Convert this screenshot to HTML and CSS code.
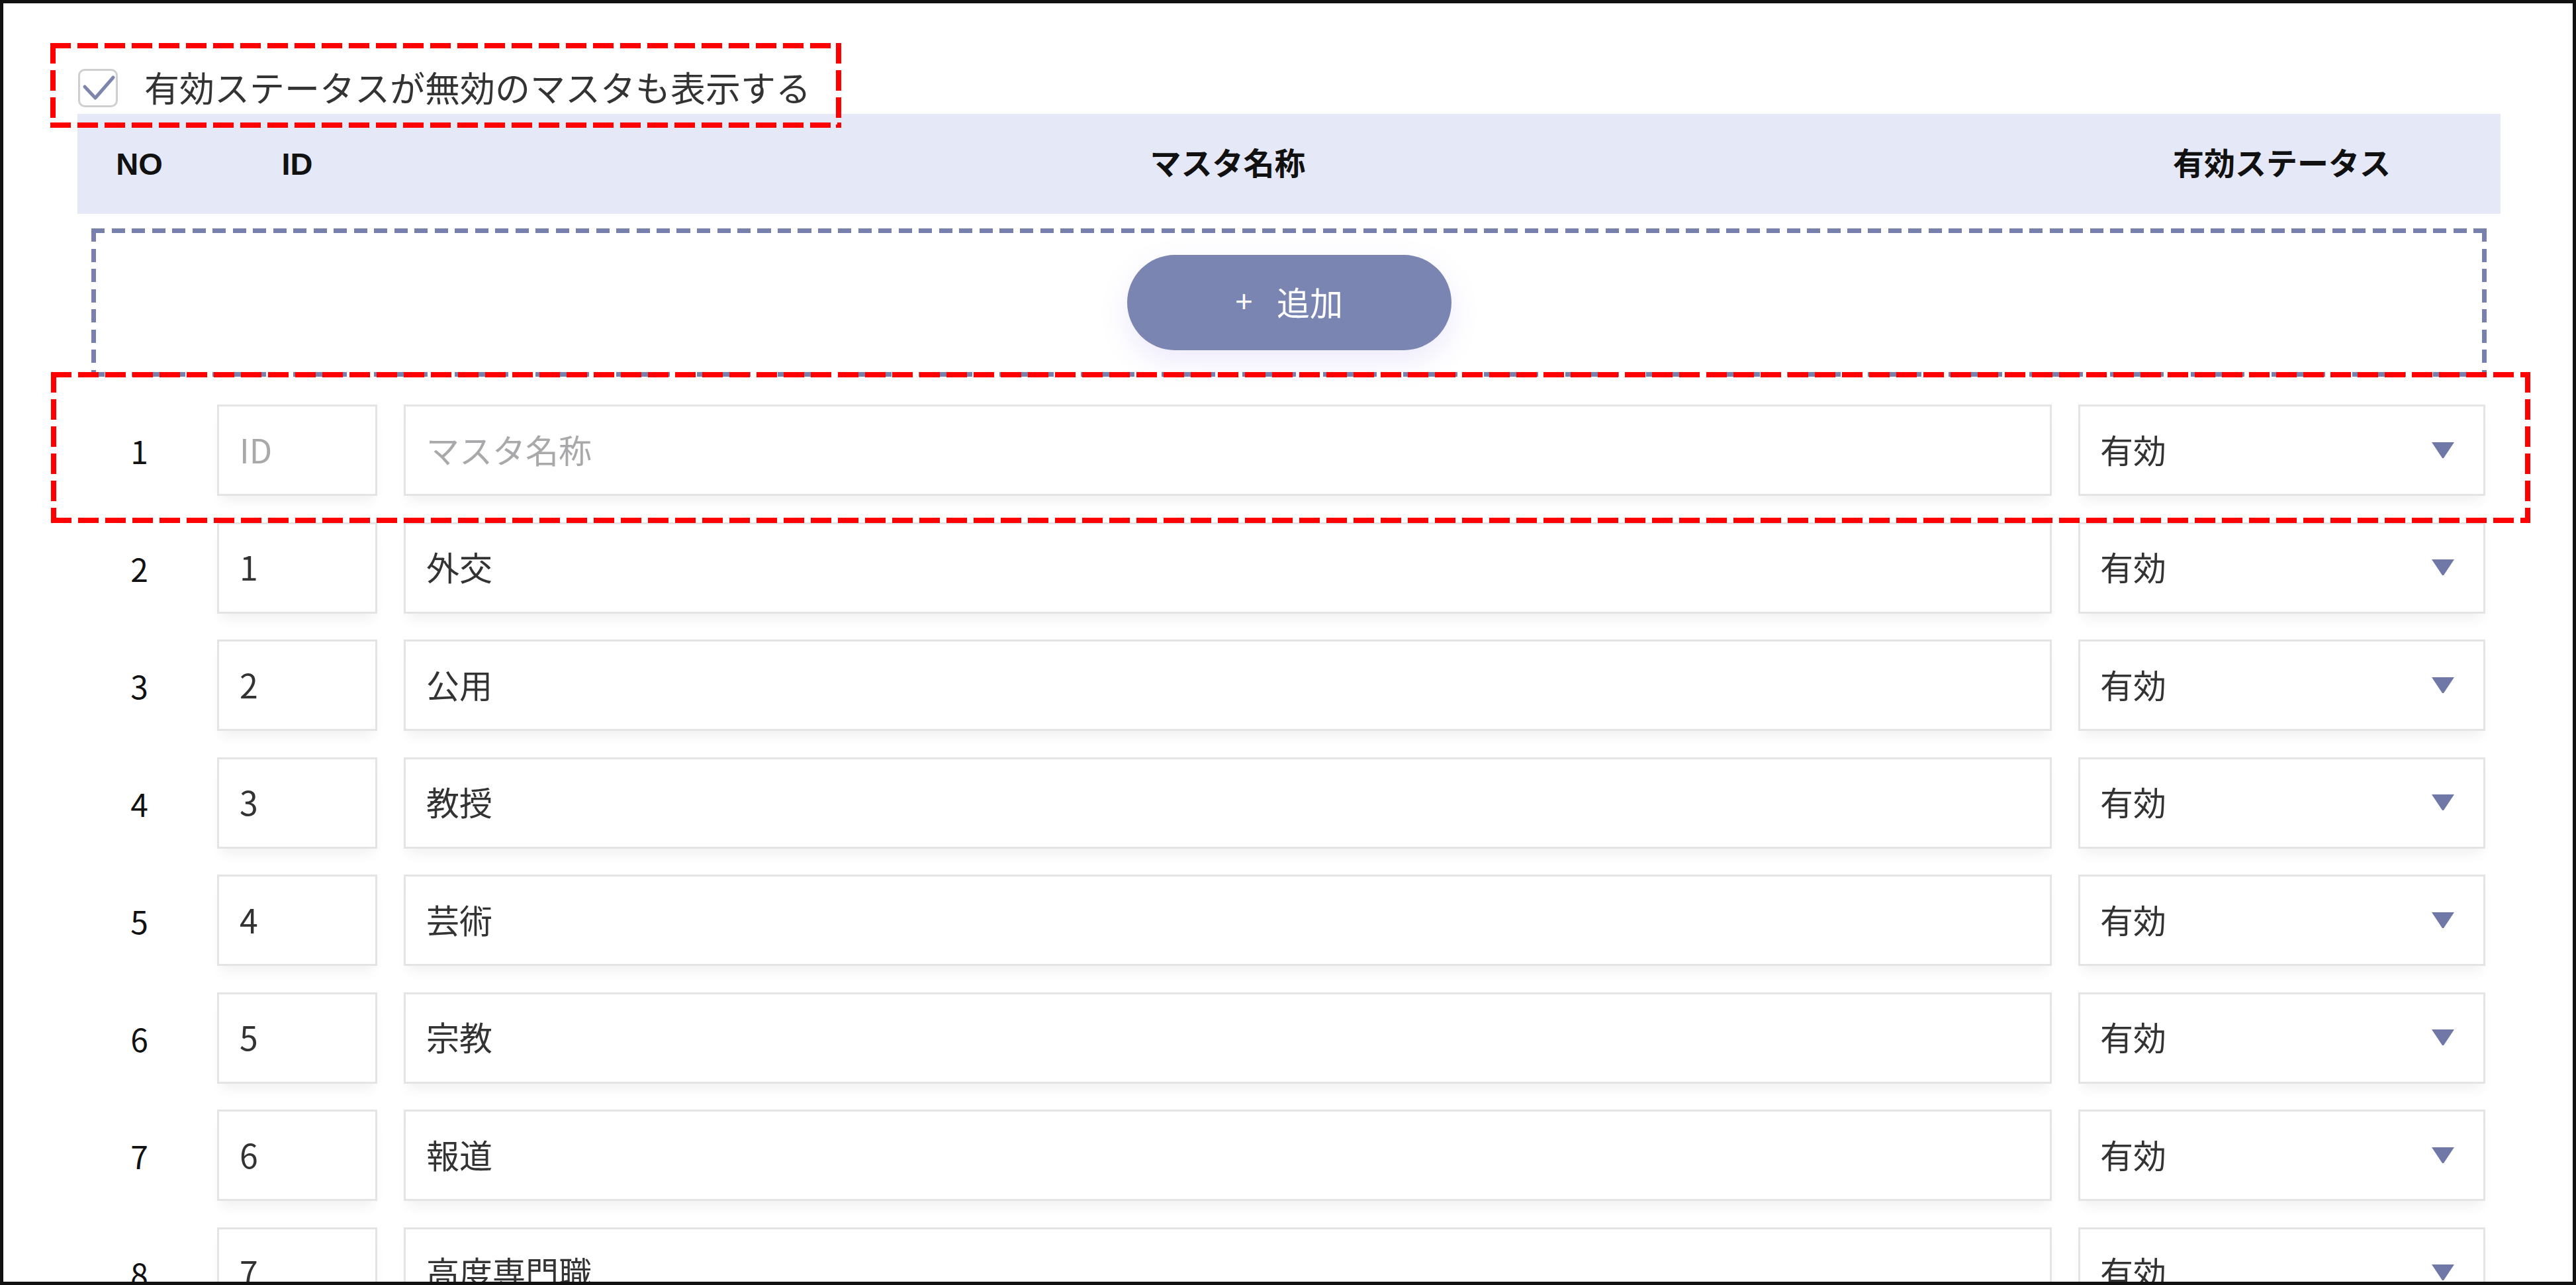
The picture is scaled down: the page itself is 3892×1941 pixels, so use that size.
FILE: index.html
```html
<!DOCTYPE html>
<html lang="ja">
<head>
<meta charset="utf-8">
<title>マスタ管理</title>
<link rel="stylesheet" href="styles.css">
</head>
<body>
<div class="frame">
  <div class="page">
    <label class="show-inactive">
      <span class="cb">
        <svg viewBox="0 0 60 58" width="60" height="58"><polyline points="10,27 26,44 53,13" fill="none" stroke="#7c86ad" stroke-width="5" stroke-linecap="round" stroke-linejoin="round"/></svg>
      </span>
      <span class="cb-label">有効ステータスが無効のマスタも表示する</span>
    </label>

    <div class="thead grid">
      <div class="th no-col">NO</div>
      <div class="th">ID</div>
      <div class="th">マスタ名称</div>
      <div class="th">有効ステータス</div>
    </div>

    <div class="add-zone">
      <button class="add-btn"><span class="plus">+</span><span>追加</span></button>
    </div>

    <div class="rows">
      <div class="row grid">
        <div class="no">1</div>
        <div class="field ph">ID</div>
        <div class="field ph">マスタ名称</div>
        <div class="field select"><span>有効</span><svg class="tri" viewBox="0 0 34 24" width="34" height="24"><polygon points="0,0 34,0 18,24 16,24" fill="#6f78a6"/></svg></div>
      </div>
      <div class="row grid">
        <div class="no">2</div>
        <div class="field">1</div>
        <div class="field">外交</div>
        <div class="field select"><span>有効</span><svg class="tri" viewBox="0 0 34 24" width="34" height="24"><polygon points="0,0 34,0 18,24 16,24" fill="#6f78a6"/></svg></div>
      </div>
      <div class="row grid">
        <div class="no">3</div>
        <div class="field">2</div>
        <div class="field">公用</div>
        <div class="field select"><span>有効</span><svg class="tri" viewBox="0 0 34 24" width="34" height="24"><polygon points="0,0 34,0 18,24 16,24" fill="#6f78a6"/></svg></div>
      </div>
      <div class="row grid">
        <div class="no">4</div>
        <div class="field">3</div>
        <div class="field">教授</div>
        <div class="field select"><span>有効</span><svg class="tri" viewBox="0 0 34 24" width="34" height="24"><polygon points="0,0 34,0 18,24 16,24" fill="#6f78a6"/></svg></div>
      </div>
      <div class="row grid">
        <div class="no">5</div>
        <div class="field">4</div>
        <div class="field">芸術</div>
        <div class="field select"><span>有効</span><svg class="tri" viewBox="0 0 34 24" width="34" height="24"><polygon points="0,0 34,0 18,24 16,24" fill="#6f78a6"/></svg></div>
      </div>
      <div class="row grid">
        <div class="no">6</div>
        <div class="field">5</div>
        <div class="field">宗教</div>
        <div class="field select"><span>有効</span><svg class="tri" viewBox="0 0 34 24" width="34" height="24"><polygon points="0,0 34,0 18,24 16,24" fill="#6f78a6"/></svg></div>
      </div>
      <div class="row grid">
        <div class="no">7</div>
        <div class="field">6</div>
        <div class="field">報道</div>
        <div class="field select"><span>有効</span><svg class="tri" viewBox="0 0 34 24" width="34" height="24"><polygon points="0,0 34,0 18,24 16,24" fill="#6f78a6"/></svg></div>
      </div>
      <div class="row grid">
        <div class="no">8</div>
        <div class="field">7</div>
        <div class="field">高度専門職</div>
        <div class="field select"><span>有効</span><svg class="tri" viewBox="0 0 34 24" width="34" height="24"><polygon points="0,0 34,0 18,24 16,24" fill="#6f78a6"/></svg></div>
      </div>
    </div>
  </div>

  <div class="anno anno-check"></div>
  <div class="anno anno-row"></div>
</div>
</body>
</html>
```

FILE: styles.css
```css
* { box-sizing: border-box; }

html, body {
  margin: 0;
  padding: 0;
  overflow: hidden;
  background: #fff;
}

body {
  font-family: "Noto Sans CJK JP", "Liberation Sans", sans-serif;
  color: #333;
}

.frame {
  position: relative;
  width: 3892px;
  height: 1941px;
  border: 5px solid #111;
  overflow: hidden;
  background: #fff;
}

.page {
  padding: 99px 109px 0 112px;
}

/* checkbox row */
.show-inactive {
  display: flex;
  align-items: center;
  gap: 40px;
  height: 58px;
  margin-left: 1px;
}

.cb {
  width: 60px;
  height: 58px;
  border: 3px solid #cfcfd2;
  border-radius: 10px;
  display: flex;
  align-items: center;
  justify-content: center;
  overflow: hidden;
}

.cb svg { display: block; flex: none; }

.cb-label {
  font-size: 53px;
  line-height: 58px;
  color: #333;
  white-space: nowrap;
  padding-bottom: 4px;
}

/* grid shared by header and rows */
.grid {
  display: grid;
  grid-template-columns: 171px 242px 1fr 615px;
  column-gap: 40px;
  padding-right: 23px;
}

.thead {
  margin-top: 10px;
  height: 151px;
  background: #e5e8f6;
  align-items: center;
}

.th {
  text-align: center;
  font-family: "Liberation Sans", "Noto Sans CJK JP", sans-serif;
  font-weight: bold;
  font-size: 47px;
  line-height: 60px;
  color: #111;
}

.no-col { padding-left: 16px; }

/* add zone */
.add-zone {
  margin: 22px 21px 0;
  height: 224px;
  display: flex;
  align-items: center;
  justify-content: center;
  background:
    repeating-linear-gradient(90deg, #7881ae 0 20px, transparent 20px 30.5px) left top / 100% 7px no-repeat,
    repeating-linear-gradient(90deg, #7881ae 0 20px, transparent 20px 30.5px) left bottom / 100% 7px no-repeat,
    repeating-linear-gradient(180deg, #7881ae 0 20px, transparent 20px 30.5px) left top / 7px 100% no-repeat,
    repeating-linear-gradient(180deg, #7881ae 0 20px, transparent 20px 30.5px) right top / 7px 100% no-repeat;
}

.add-btn {
  width: 490px;
  height: 144px;
  border: none;
  border-radius: 72px;
  background: #7a85b1;
  color: #fff;
  font-family: "Noto Sans CJK JP", "Liberation Sans", sans-serif;
  font-size: 50px;
  display: flex;
  align-items: center;
  justify-content: center;
  gap: 36px;
  box-shadow: 0 16px 44px rgba(140, 120, 230, 0.16);
  padding: 0 0 4px;
}

.plus {
  font-family: "Liberation Sans", sans-serif;
  font-size: 46px;
}

/* rows */
.rows {
  margin-top: 42px;
  display: flex;
  flex-direction: column;
  gap: 39.57px;
}

.row {
  height: 138px;
  flex: none;
}

.no {
  align-self: center;
  text-align: center;
  padding-left: 16px;
  font-size: 48px;
  line-height: 60px;
  color: #111;
}

.field {
  border: 3px solid #e4e4e6;
  background: #fff;
  display: flex;
  align-items: center;
  padding-left: 31px;
  padding-bottom: 5px;
  font-size: 50px;
  color: #333;
  white-space: nowrap;
  box-shadow: 0 14px 18px -6px rgba(0, 0, 0, 0.06);
}

.ph { color: #a9a9ab; }

.select {
  justify-content: space-between;
  padding-right: 44px;
  padding-left: 30px;
}

.tri { display: block; flex: none; margin-top: 4px; }

/* annotation overlays */
.anno {
  position: absolute;
  pointer-events: none;
  background:
    repeating-linear-gradient(90deg, #ff0000 0 31px, transparent 31px 41px) left top / 100% 8px no-repeat,
    repeating-linear-gradient(90deg, #ff0000 0 31px, transparent 31px 41px) left bottom / 100% 8px no-repeat,
    repeating-linear-gradient(180deg, #ff0000 0 31px, transparent 31px 41px) left top / 8px 100% no-repeat,
    repeating-linear-gradient(180deg, #ff0000 0 31px, transparent 31px 41px) right top / 8px 100% no-repeat;
}

.anno-check {
  left: 71px;
  top: 60px;
  width: 1195px;
  height: 128px;
}

.anno-row {
  left: 72px;
  top: 557px;
  width: 3746px;
  height: 228px;
}
```
